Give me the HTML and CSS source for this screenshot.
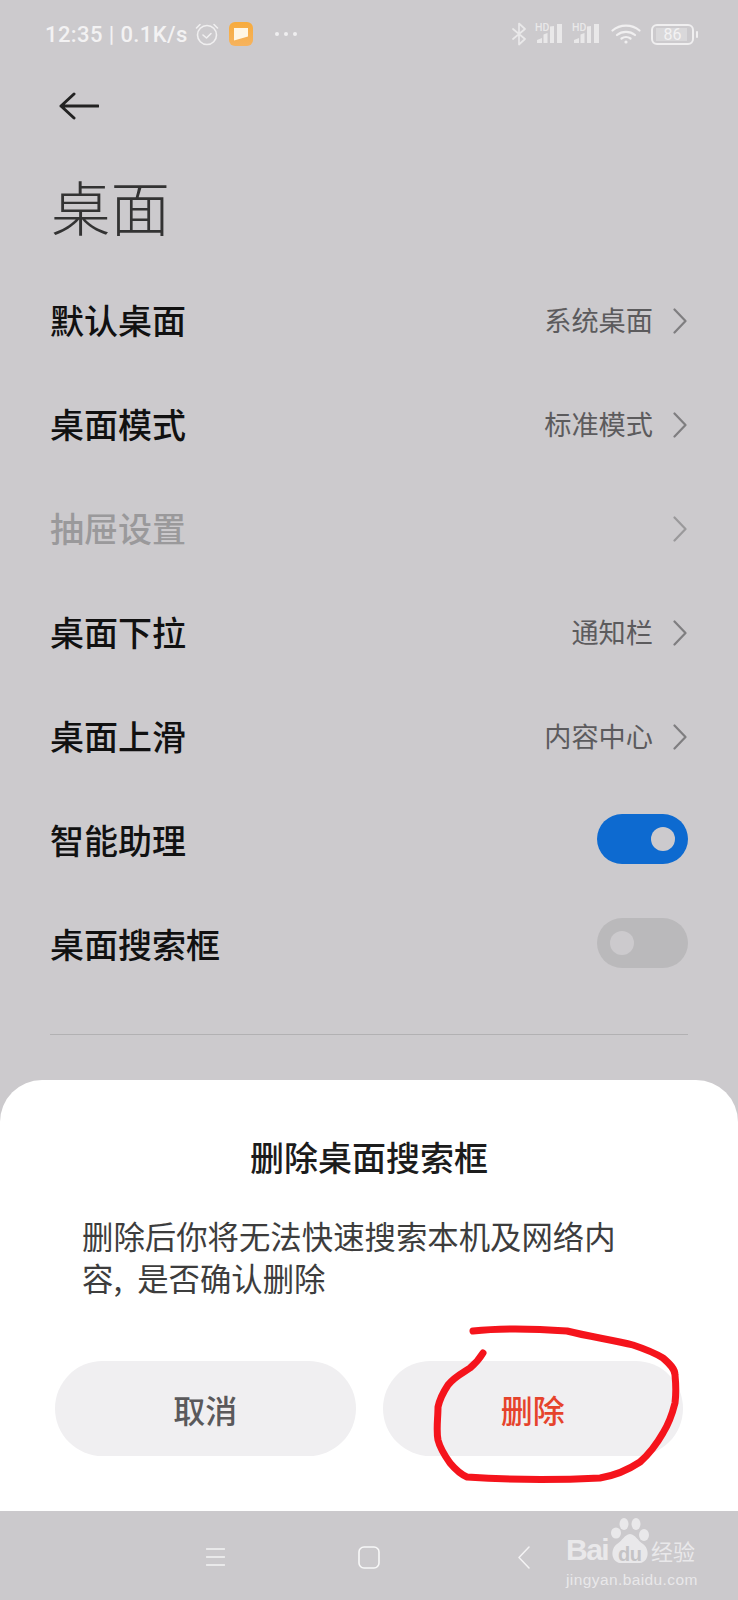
FILE: index.html
```html
<!DOCTYPE html>
<html lang="zh">
<head>
<meta charset="utf-8">
<title>桌面</title>
<link rel="stylesheet" href="styles.css">
</head>
<body>
<div class="page">
  <main class="main">
    <div class="status">
      <div class="status-left">
        <span class="status-text">12:35 | 0.1K/s</span>
        <svg class="alarm" width="24" height="24" viewBox="0 0 24 24" fill="none" stroke="#f0eff0" stroke-width="1.6" stroke-linecap="round" stroke-linejoin="round"><circle cx="12" cy="13" r="9.5"/><path d="M8 13l3.5 3 4.5-4.5M1.5 6L5 2.5M22.5 6L19 2.5"/></svg>
        <svg class="app" width="24" height="24" viewBox="0 0 24 24"><defs><linearGradient id="appbg" x1="0" y1="0" x2="0" y2="1"><stop offset="0" stop-color="#f7ab3c"/><stop offset="1" stop-color="#f6b35e"/></linearGradient></defs><rect width="24" height="24" rx="6" fill="url(#appbg)"/><path d="M5 6h14v8.500L5 18.500z" fill="#fff6e4"/></svg>
        <svg class="dots" width="24" height="6" viewBox="0 0 24 6" fill="#f0eff0"><circle cx="3" cy="3" r="2"/><circle cx="12" cy="3" r="2"/><circle cx="21" cy="3" r="2"/></svg>
      </div>
      <div class="status-right">
        <svg width="15" height="24" viewBox="0 0 15 24" fill="none" stroke="#e9e8e9" stroke-width="1.7" stroke-linejoin="round" stroke-linecap="round"><path d="M1 7l12 10-6 5.500V1.500l6 5.500L1 17"/></svg>
        <span class="sig"><span class="hd">HD</span><svg width="29" height="22" viewBox="0 0 29 22" fill="#e9e8e9"><path d="M2 20v-3l5-2v5zM8.500 20v-8.500l4-1.500v10zM15 20V3.500l4-0.500v17zM22 20V1h5v19z"/></svg></span>
        <span class="sig"><span class="hd">HD</span><svg width="29" height="22" viewBox="0 0 29 22" fill="#e9e8e9"><path d="M2 20v-3l5-2v5zM8.500 20v-8.500l4-1.500v10zM15 20V3.500l4-0.500v17zM22 20V1h5v19z"/></svg></span>
        <svg class="wifi" width="30" height="20" viewBox="0 0 30 20" fill="none" stroke="#f0eff0" stroke-width="2.200" stroke-linecap="round"><path d="M1.500 6.500C9 0 21 0 28.500 6.500M6 11c5-4.300 13-4.300 18 0M10.500 14.500c2.500-1.800 6.500-1.800 9 0"/><circle cx="15" cy="18" r="1.600" fill="#f0eff0" stroke="none"/></svg>
        <span class="battery"><span class="batt-body">86</span><span class="batt-nub"></span></span>
      </div>
    </div>
    <div class="back">
      <svg width="40" height="28" viewBox="0 0 40 28" fill="none" stroke="#222" stroke-width="3" stroke-linecap="round" stroke-linejoin="round"><path d="M39 14H2M15 2L2 14l13 12"/></svg>
    </div>
    <h1 class="title">桌面</h1>
    <ul class="list">
      <li class="row"><span class="label">默认桌面</span><span class="value">系统桌面</span><svg class="chev" width="14" height="26" viewBox="0 0 14 26" fill="none"><path d="M1.500 1.500L12.500 13 1.500 24.500"/></svg></li>
      <li class="row"><span class="label">桌面模式</span><span class="value">标准模式</span><svg class="chev" width="14" height="26" viewBox="0 0 14 26" fill="none"><path d="M1.500 1.500L12.500 13 1.500 24.500"/></svg></li>
      <li class="row disabled"><span class="label">抽屉设置</span><svg class="chev" width="14" height="26" viewBox="0 0 14 26" fill="none"><path d="M1.500 1.500L12.500 13 1.500 24.500"/></svg></li>
      <li class="row"><span class="label">桌面下拉</span><span class="value">通知栏</span><svg class="chev" width="14" height="26" viewBox="0 0 14 26" fill="none"><path d="M1.500 1.500L12.500 13 1.500 24.500"/></svg></li>
      <li class="row"><span class="label">桌面上滑</span><span class="value">内容中心</span><svg class="chev" width="14" height="26" viewBox="0 0 14 26" fill="none"><path d="M1.500 1.500L12.500 13 1.500 24.500"/></svg></li>
      <li class="row"><span class="label">智能助理</span><span class="toggle on"><span class="knob"></span></span></li>
      <li class="row"><span class="label">桌面搜索框</span><span class="toggle"><span class="knob"></span></span></li>
    </ul>
    <hr class="divider">
  </main>
  <section class="sheet">
    <h2 class="sheet-title">删除桌面搜索框</h2>
    <p class="sheet-text">删除后你将无法快速搜索本机及网络内容, 是否确认删除</p>
    <div class="actions">
      <button class="btn">取消</button>
      <button class="btn danger">删除</button>
    </div>
  </section>
  <nav class="nav">
    <svg class="nav-menu" width="19" height="18" viewBox="0 0 19 18" fill="none" stroke="#f4f3f4" stroke-width="1.500" stroke-linecap="round"><path d="M0.500 1h18M0.500 9h18M0.500 17h18"/></svg>
    <svg class="nav-home" width="22" height="23" viewBox="0 0 22 23" fill="none" stroke="#f8f8f8" stroke-width="1.600"><rect x="1" y="1" width="20" height="21" rx="5"/></svg>
    <svg class="nav-back" width="12" height="23" viewBox="0 0 12 23" fill="none" stroke="#f4f3f4" stroke-width="1.500" stroke-linecap="round" stroke-linejoin="round"><path d="M11 1L1 11.500l10 10.500"/></svg>
  </nav>
  <svg class="scribble" width="738" height="1600" viewBox="0 0 738 1600" fill="none" stroke="#f5141c" stroke-width="7" stroke-linecap="round" stroke-linejoin="round"><path d="M473 1331C500 1328 540 1329 567 1331C590 1337 615 1340 633 1345C645 1349 655 1353 663 1358C670 1364 675 1369 675 1375C676 1385 676 1395 675 1403C672 1415 668 1425 663 1433C655 1447 648 1455 640 1462C628 1470 612 1476 600 1478C560 1480 510 1480 467 1477C460 1474 455 1469 450 1463C445 1456 440 1448 438 1440C436 1430 438 1418 438 1407C440 1398 444 1391 448 1385C455 1376 463 1373 470 1368C476 1363 480 1358 483 1353"/></svg>
  <div class="mark">
    <div class="mark-top"><span class="mark-bai">Bai</span><svg class="mark-paw" width="40" height="45" viewBox="0 0 40 45" fill="#e9e8ea"><ellipse cx="6" cy="15" rx="5" ry="5.500"/><ellipse cx="14" cy="6" rx="4.500" ry="6"/><ellipse cx="26" cy="6" rx="4.500" ry="6"/><ellipse cx="34" cy="17" rx="5" ry="6"/><path d="M20 16C14 17 13 22 7 26C0 31 1 44 10 45H30C39 44 40 31 33 26C27 22 26 17 20 16z"/></svg><span class="mark-du">du</span><span class="mark-cn">经验</span></div>
    <div class="mark-url">jingyan.baidu.com</div>
  </div>
</div>
</body>
</html>
```
FILE: styles.css
```css
* { box-sizing: border-box; }
html, body { margin: 0; padding: 0; }
body {
  width: 738px;
  height: 1600px;
  overflow: hidden;
  font-family: "Noto Sans CJK SC", "Noto Sans", sans-serif;
}
.page {
  position: relative;
  display: flex;
  flex-direction: column;
  width: 738px;
  height: 1600px;
  background: #cccacd;
}
.main { flex: 1; min-height: 0; overflow: hidden; }
.status {
  display: flex;
  justify-content: space-between;
  align-items: center;
  height: 68px;
  padding: 0 45px;
}
.status-left { display: flex; align-items: center; }
.status-text {
  font-family: Roboto, "Liberation Sans", sans-serif;
  font-weight: 500;
  font-size: 22px;
  letter-spacing: 0.4px;
  color: #f3f2f3;
  white-space: nowrap;
}
.alarm { margin-left: 7px; }
.app { margin-left: 10px; }
.dots { margin-left: 21px; }
.status-right { display: flex; align-items: center; gap: 8px; margin-right: -5px; }
.sig { position: relative; display: block; width: 29px; height: 22px; }
.sig svg { display: block; }
.hd {
  position: absolute;
  left: 0;
  top: 0;
  font-family: Roboto, sans-serif;
  font-size: 10.500px;
  font-weight: 500;
  line-height: 9px;
  color: #e9e8e9;
}
.wifi { margin-left: 2px; }
.battery { display: flex; align-items: center; margin-left: 2px; }
.batt-body {
  width: 43px;
  height: 21px;
  border: 2px solid #f0eff0;
  border-radius: 6px;
  text-align: center;
  font-family: Roboto, sans-serif;
  font-size: 16px;
  line-height: 17px;
  color: #f3f2f3;
  background: linear-gradient(#d9d8da, #d9d8da) no-repeat 3px 2px / 31px 13px;
}
.batt-nub { width: 2px; height: 7px; margin-left: 2px; background: #f0eff0; border-radius: 1px; }
.back { display: flex; align-items: center; height: 76px; padding-left: 59px; }
.back svg { display: block; }
.title {
  margin: 0;
  height: 123px;
  padding-left: 51px;
  font-size: 59.500px;
  font-weight: 300;
  line-height: 122px;
  color: #333;
}
.list { margin: 0; padding: 0 50px; list-style: none; }
.row { display: flex; align-items: center; height: 104px; }
.label { flex: 1; font-size: 34px; font-weight: 500; color: #111; }
.value { font-size: 27.200px; color: #5c5b5d; margin-right: 20px; }
.chev { display: block; margin: 4px 1px 0 0; }
.chev path { stroke: #7f7e80; stroke-width: 2.200; stroke-linecap: round; stroke-linejoin: round; }
.disabled .label { color: #9a999b; }
.disabled .chev path { stroke: #9a999b; }
.toggle {
  display: flex;
  align-items: center;
  width: 91px;
  height: 50px;
  padding: 0 13px;
  border-radius: 25px;
  background: #bab9bb;
}
.toggle.on { justify-content: flex-end; background: #0d6ad0; }
.knob { width: 24px; height: 24px; border-radius: 50%; background: #cccacd; }
.divider { margin: 39px 50px 0; border: 0; border-top: 1px solid #b2b1b3; }
.sheet {
  height: 431px;
  padding: 60px 55px 0;
  background: #fff;
  border-radius: 42px 42px 0 0;
}
.sheet-title {
  margin: 0;
  text-align: center;
  font-size: 34px;
  font-weight: 500;
  line-height: 34px;
  color: #1c1c1c;
}
.sheet-text {
  margin: 41px 0 0;
  padding: 0 60px 0 27px;
  font-size: 31.400px;
  line-height: 42px;
  word-spacing: 8px;
  color: #3d3d3d;
}
.actions { display: flex; gap: 27px; margin-top: 62px; }
.btn {
  flex: 1;
  height: 95px;
  border: 0;
  border-radius: 48px;
  background: #f0eff1;
  font-family: inherit;
  font-size: 32px;
  font-weight: 500;
  color: #5a595b;
}
.btn.danger { color: #e6432c; }
.nav {
  position: relative;
  height: 89px;
  background: #cbc9cc;
}
.nav svg { position: absolute; }
.nav-menu { left: 206px; top: 37px; }
.nav-home { left: 358px; top: 35px; }
.nav-back { left: 518px; top: 35px; }
.scribble { position: absolute; left: 0; top: 0; pointer-events: none; }
.mark { position: absolute; left: 566px; top: 1518px; width: 134px; color: #e9e8ea; }
.mark-top { display: flex; align-items: flex-end; height: 45px; }
.mark-bai, .mark-du {
  font-family: "Liberation Sans", sans-serif;
  font-weight: 700;
}
.mark-bai { width: 44px; font-size: 30px; line-height: 26px; letter-spacing: -1.500px; }
.mark-du {
  position: absolute;
  left: 52px;
  top: 26px;
  font-size: 20px;
  line-height: 20px;
  letter-spacing: -0.5px;
  color: #c4c3c5;
}
.mark-cn { margin-left: 1px; font-size: 22px; line-height: 26px; font-weight: 400; white-space: nowrap; }
.mark-url {
  margin-top: 8px;
  font-family: "Liberation Sans", sans-serif;
  font-size: 15.500px;
  line-height: 18px;
  letter-spacing: 0.4px;
  white-space: nowrap;
}
```
